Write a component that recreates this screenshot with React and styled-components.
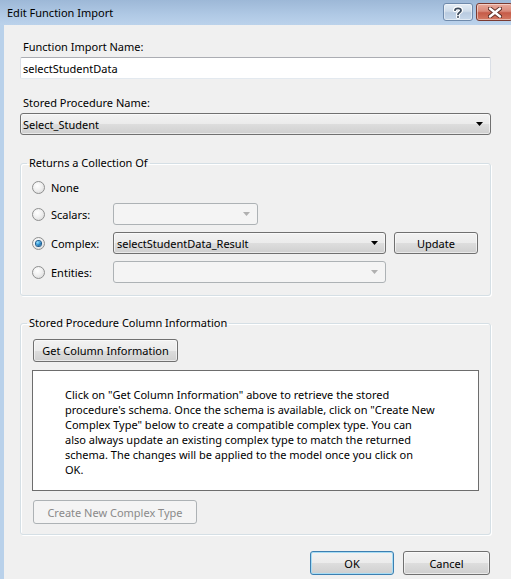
import styled, { createGlobalStyle } from "styled-components";

const GlobalStyle = createGlobalStyle`
  html, body {
    margin: 0;
    padding: 0;
    background: #f0f0f0;
  }
  body {
    font-family: "Noto Sans", "Open Sans", sans-serif;
    font-size: 11px;
    color: #000;
  }
  * {
    box-sizing: border-box;
  }
`;

const Window = styled.div`
  width: 511px;
  height: 579px;
  overflow: hidden;
  display: flex;
  flex-direction: column;
  background: #b9d1ea;
`;

const TitleBar = styled.div`
  height: 25px;
  flex: none;
  display: flex;
  align-items: flex-start;
  justify-content: space-between;
  padding-left: 7px;
  background: linear-gradient(to bottom, #9db8d7 0%, #b0c9e5 60%, #bbd2eb 100%);
`;

const Title = styled.span`
  margin-top: 5px;
  font-size: 11px;
  line-height: 16px;
`;

const Controls = styled.div`
  display: flex;
  gap: 3px;
  margin-top: 3px;
  margin-right: -2px;
`;

const CaptionButton = styled.div`
  width: ${(p) => p.$w}px;
  height: 18px;
  display: flex;
  align-items: center;
  justify-content: center;
  border: 1px solid ${(p) => (p.$close ? "#7a3a30" : "#6f8aab")};
  border-radius: 3px;
  background: ${(p) =>
    p.$close
      ? "linear-gradient(to bottom, #e9a99b 0%, #d98a7a 45%, #c65b48 55%, #d47a63 100%)"
      : "linear-gradient(to bottom, #e4edf6 0%, #cfdcea 45%, #b9cbe0 55%, #c7d8ea 100%)"};
  box-shadow: inset 0 0 0 1px rgba(255, 255, 255, 0.45);
`;

const Client = styled.div`
  flex: 1;
  margin-left: 4px;
  background: #f0f0f0;
  display: flex;
  flex-direction: column;
  padding: 14px 20px 0 16px;
`;

const FieldLabel = styled.div`
  font-size: 11px;
  line-height: 16px;
  height: 16px;
  padding-left: 3px;
  margin-top: ${(p) => p.$mt || 0}px;
`;

const TextInput = styled.div`
  margin-top: 2px;
  height: 22px;
  display: flex;
  align-items: center;
  padding: 0 2px;
  background: #fff;
  border: 1px solid #dbdfe6;
  border-top-color: #abadb3;
  border-bottom-color: #e3e9ef;
  border-radius: 2px;
  font-size: 11px;
`;

const Combo = styled.div`
  height: 22px;
  width: ${(p) => (p.$w ? `${p.$w}px` : "auto")};
  margin-top: ${(p) => p.$mt || 0}px;
  display: flex;
  align-items: center;
  justify-content: space-between;
  padding: 0 7px 0 ${(p) => p.$pl || 2}px;
  font-size: 11px;
  border-radius: 3px;
  border: 1px solid ${(p) => (p.$disabled ? "#adb2b5" : "#707070")};
  background: ${(p) =>
    p.$disabled
      ? "#f4f4f4"
      : "linear-gradient(to bottom, #f2f2f2 0%, #ebebeb 50%, #dddddd 51%, #cfcfcf 100%)"};
  box-shadow: ${(p) => (p.$disabled ? "none" : "inset 0 0 0 1px rgba(255,255,255,0.55)")};
`;

const Arrow = ({ color = "#000" }) => (
  <svg width="7" height="4" viewBox="0 0 7 4">
    <polygon points="0,0 7,0 3.5,4" fill={color} />
  </svg>
);

const Group = styled.fieldset`
  margin: ${(p) => p.$mt}px 0 0 0;
  padding: 8px 11px ${(p) => p.$pb}px 11px;
  border: 1px solid #d5dfe5;
  border-radius: 3px;
  box-shadow: inset 1px 1px 0 #fff, 1px 1px 0 #fff;
  min-width: 0;
`;

const Legend = styled.legend`
  font-size: 11px;
  line-height: 16px;
  padding: 0 2px;
  margin-left: -5px;
`;

const Options = styled.div`
  display: flex;
  flex-direction: column;
  gap: 7px;
`;

const OptionRow = styled.div`
  height: ${(p) => p.$h || 22}px;
  display: flex;
  align-items: center;
`;

const Radio = styled.span`
  width: 13px;
  height: 13px;
  flex: none;
  margin-right: 6px;
  border-radius: 50%;
  border: 1px solid #8e8f8f;
  background: radial-gradient(circle at 40% 35%, #ffffff 0%, #f0f0f0 45%, #d4d4d4 100%);
  display: flex;
  align-items: center;
  justify-content: center;
  &::after {
    content: "";
    display: ${(p) => (p.$checked ? "block" : "none")};
    width: 5px;
    height: 5px;
    border-radius: 50%;
    background: radial-gradient(circle at 35% 30%, #8fe0ff 0%, #2a8fd0 50%, #0b3f70 100%);
    box-shadow: 0 0 0 1px #1d5c8f;
  }
`;

const OptionLabel = styled.span`
  width: 62px;
  flex: none;
  font-size: 11px;
`;

const Button = styled.div`
  height: ${(p) => p.$h || 23}px;
  width: ${(p) => p.$w}px;
  margin-left: ${(p) => p.$ml || 0}px;
  margin-top: ${(p) => p.$mt || 0}px;
  flex: none;
  display: flex;
  align-items: center;
  justify-content: center;
  font-size: 11px;
  border-radius: 3px;
  color: ${(p) => (p.$disabled ? "#8a8a8a" : "#000")};
  border: 1px solid
    ${(p) => (p.$disabled ? "#adb2b5" : p.$default ? "#3c7fb1" : "#707070")};
  background: ${(p) =>
    p.$disabled
      ? "#f4f4f4"
      : "linear-gradient(to bottom, #f2f2f2 0%, #ebebeb 50%, #dddddd 51%, #cfcfcf 100%)"};
  box-shadow: ${(p) =>
    p.$disabled
      ? "none"
      : p.$default
      ? "inset 0 0 0 1px #a7dcf4"
      : "inset 0 0 0 1px rgba(255,255,255,0.55)"};
`;

const InfoBox = styled.div`
  margin-top: 8px;
  height: 121px;
  background: #fff;
  border: 1px solid #6d6d6d;
  padding: 16px 0 0 32px;
  font-size: 11px;
  line-height: 15px;
  white-space: nowrap;
`;

const Footer = styled.div`
  margin-top: 16px;
  display: flex;
  justify-content: flex-end;
  gap: 9px;
  padding-right: 1px;
`;

const HelpGlyph = () => (
  <svg width="12" height="13" viewBox="0 0 12 13">
    <path
      d="M3 4.2 C3 1.8 9 1.6 9 4.4 C9 6.4 6 6.4 6 8.4"
      fill="none"
      stroke="#fff"
      strokeWidth="4"
      strokeLinecap="round"
    />
    <circle cx="6" cy="11" r="2" fill="#fff" />
    <path
      d="M3 4.2 C3 1.8 9 1.6 9 4.4 C9 6.4 6 6.4 6 8.4"
      fill="none"
      stroke="#3b4a5c"
      strokeWidth="1.8"
      strokeLinecap="round"
    />
    <circle cx="6" cy="11" r="1" fill="#3b4a5c" />
  </svg>
);

const CloseGlyph = () => (
  <svg width="14" height="11" viewBox="0 0 14 11">
    <path d="M2 1.5 L12 9.5 M12 1.5 L2 9.5" stroke="#5a2a22" strokeWidth="4.2" strokeLinecap="round" />
    <path d="M2 1.5 L12 9.5 M12 1.5 L2 9.5" stroke="#fff" strokeWidth="2.4" strokeLinecap="round" />
  </svg>
);

export default function App() {
  return (
    <>
      <GlobalStyle />
      <Window>
        <TitleBar>
          <Title>Edit Function Import</Title>
          <Controls>
            <CaptionButton $w={30}>
              <HelpGlyph />
            </CaptionButton>
            <CaptionButton $w={37} $close>
              <CloseGlyph />
            </CaptionButton>
          </Controls>
        </TitleBar>

        <Client>
          <FieldLabel>Function Import Name:</FieldLabel>
          <TextInput>selectStudentData</TextInput>

          <FieldLabel $mt={16}>Stored Procedure Name:</FieldLabel>
          <Combo $mt={2}>
            <span>Select_Student</span>
            <Arrow />
          </Combo>

          <Group $mt={20} $pb={12}>
            <Legend>Returns a Collection Of</Legend>
            <Options>
              <OptionRow $h={17}>
                <Radio />
                <OptionLabel>None</OptionLabel>
              </OptionRow>
              <OptionRow>
                <Radio />
                <OptionLabel>Scalars:</OptionLabel>
                <Combo $w={145} $disabled>
                  <span />
                  <Arrow color="#b0b0b0" />
                </Combo>
              </OptionRow>
              <OptionRow>
                <Radio $checked />
                <OptionLabel>Complex:</OptionLabel>
                <Combo $w={273} $pl={3}>
                  <span>selectStudentData_Result</span>
                  <Arrow />
                </Combo>
                <Button $w={84} $h={22} $ml={8}>
                  Update
                </Button>
              </OptionRow>
              <OptionRow>
                <Radio />
                <OptionLabel>Entities:</OptionLabel>
                <Combo $w={273} $disabled>
                  <span />
                  <Arrow color="#b0b0b0" />
                </Combo>
              </OptionRow>
            </Options>
          </Group>

          <Group $mt={19} $pb={10}>
            <Legend>Stored Procedure Column Information</Legend>
            <Button $w={145} $ml={1}>
              Get Column Information
            </Button>
            <InfoBox>
              Click on "Get Column Information" above to retrieve the stored
              <br />
              procedure's schema. Once the schema is available, click on "Create New
              <br />
              Complex Type" below to create a compatible complex type. You can
              <br />
              also always update an existing complex type to match the returned
              <br />
              schema. The changes will be applied to the model once you click on
              <br />
              OK.
            </InfoBox>
            <Button $w={164} $h={24} $ml={1} $mt={9} $disabled>
              Create New Complex Type
            </Button>
          </Group>

          <Footer>
            <Button $w={84} $h={24} $default>
              OK
            </Button>
            <Button $w={87} $h={24}>
              Cancel
            </Button>
          </Footer>
        </Client>
      </Window>
    </>
  );
}
